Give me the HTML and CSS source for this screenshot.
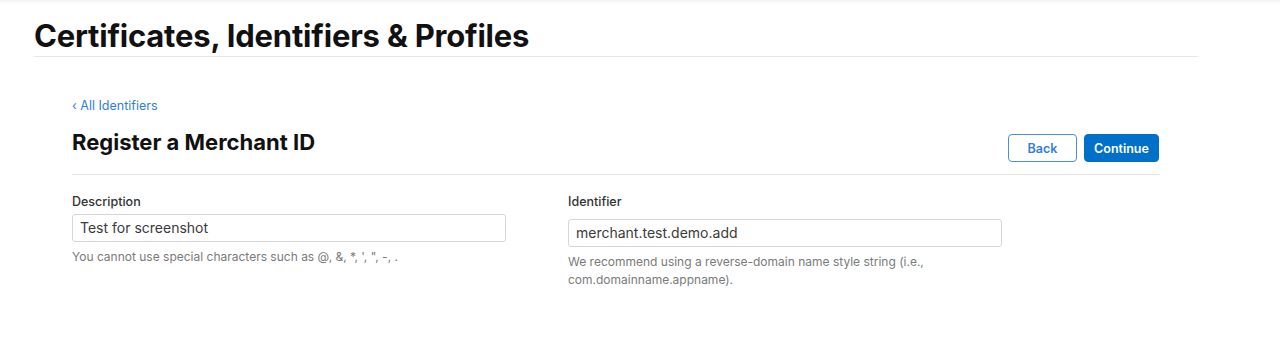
FILE: index.html
```html
<!DOCTYPE html>
<html>
<head>
<meta charset="utf-8">
<link rel="stylesheet" href="styles.css">
</head>
<body>
<div class="topbar"></div>
<header class="header">
  <h1 class="page-title">Certificates, Identifiers &amp; Profiles</h1>
</header>
<main class="main">
  <a class="back-link" href="#">‹ All Identifiers</a>
  <div class="title-row">
    <h2 class="section-title">Register a Merchant ID</h2>
    <div class="actions">
      <button class="btn btn-secondary">Back</button>
      <button class="btn btn-primary">Continue</button>
    </div>
  </div>
  <div class="form">
    <div class="field">
      <label class="label">Description</label>
      <div class="input">Test for screenshot</div>
      <p class="help">You cannot use special characters such as @, &amp;, *, ', ", -, .</p>
    </div>
    <div class="field field-identifier">
      <label class="label">Identifier</label>
      <div class="input">merchant.test.demo.add</div>
      <p class="help">We recommend using a reverse-domain name style string (i.e.,<br>com.domainname.appname).</p>
    </div>
  </div>
</main>
</body>
</html>
```

FILE: styles.css
```css
html, body {
  margin: 0;
  padding: 0;
  background: #fff;
  font-family: Inter, "Noto Sans", "Liberation Sans", sans-serif;
  color: #1d1d1f;
}

.topbar {
  height: 4px;
  background: linear-gradient(#f2f2f2, #fff);
}

.header {
  margin-left: 34px;
  width: 1164px;
}

.page-title {
  margin: 0;
  padding-top: 13px;
  height: 39px;
  font-size: 31px;
  font-weight: 700;
  line-height: 38px;
  letter-spacing: -0.2px;
  color: #111;
  border-bottom: 1px solid #e6e6e6;
}

.main {
  margin-left: 72px;
  width: 1088px;
}

.back-link {
  display: block;
  margin-top: 41px;
  font-size: 12.5px;
  line-height: 16px;
  color: #2f7fd7;
  text-decoration: none;
}

.title-row {
  display: flex;
  align-items: flex-start;
  justify-content: space-between;
  padding: 14px 0 12px;
  border-bottom: 1px solid #e6e6e6;
}

.section-title {
  margin: 0;
  font-size: 22px;
  font-weight: 700;
  line-height: 28px;
  color: #111;
}

.actions {
  display: flex;
  gap: 7px;
  margin-right: 1px;
  margin-top: 6px;
}

.btn {
  height: 28px;
  border-radius: 4px;
  font-family: inherit;
  font-size: 12.5px;
  font-weight: 600;
  padding: 0;
  cursor: pointer;
}

.btn-secondary {
  width: 69px;
  background: #fff;
  border: 1px solid #4a8fdc;
  color: #2f7fd7;
}

.btn-primary {
  width: 75px;
  background: #0070c9;
  border: 1px solid #0070c9;
  color: #fff;
}

.form {
  display: grid;
  grid-template-columns: 434px 434px;
  column-gap: 62px;
  padding-top: 19px;
}

.label {
  display: block;
  font-size: 12.5px;
  font-weight: 500;
  line-height: 16px;
  color: #333;
}

.input {
  margin-top: 4px;
  height: 28px;
  box-sizing: border-box;
  border: 1px solid #d6d6d6;
  border-radius: 3px;
  padding: 0 7px;
  font-size: 14px;
  line-height: 26px;
  color: #3a3a3a;
}

.field-identifier .input {
  margin-top: 9px;
}

.help {
  margin: 6px 0 0;
  font-size: 12px;
  line-height: 18px;
  color: #7a7a7a;
}
```
